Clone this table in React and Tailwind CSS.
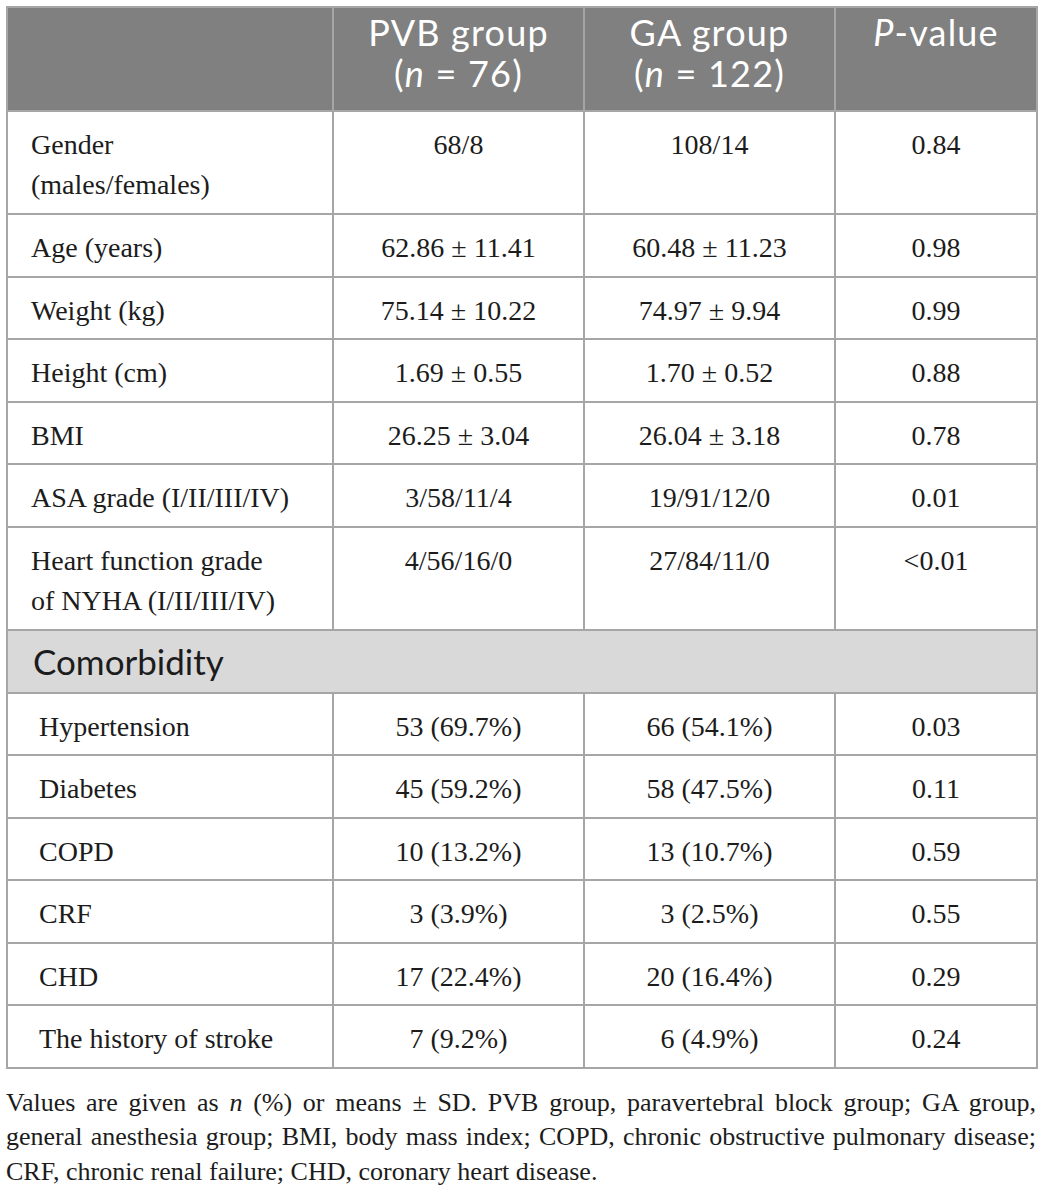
import React from 'react'

const rows = [
  { label: ['Gender', '(males/females)'], pvb: '68/8', ga: '108/14', p: '0.84' },
  { label: ['Age (years)'], pvb: '62.86 ± 11.41', ga: '60.48 ± 11.23', p: '0.98' },
  { label: ['Weight (kg)'], pvb: '75.14 ± 10.22', ga: '74.97 ± 9.94', p: '0.99' },
  { label: ['Height (cm)'], pvb: '1.69 ± 0.55', ga: '1.70 ± 0.52', p: '0.88' },
  { label: ['BMI'], pvb: '26.25 ± 3.04', ga: '26.04 ± 3.18', p: '0.78' },
  { label: ['ASA grade (I/II/III/IV)'], pvb: '3/58/11/4', ga: '19/91/12/0', p: '0.01' },
  { label: ['Heart function grade', 'of NYHA (I/II/III/IV)'], pvb: '4/56/16/0', ga: '27/84/11/0', p: '<0.01' },
]

const comorbidity = [
  { label: 'Hypertension', pvb: '53 (69.7%)', ga: '66 (54.1%)', p: '0.03' },
  { label: 'Diabetes', pvb: '45 (59.2%)', ga: '58 (47.5%)', p: '0.11' },
  { label: 'COPD', pvb: '10 (13.2%)', ga: '13 (10.7%)', p: '0.59' },
  { label: 'CRF', pvb: '3 (3.9%)', ga: '3 (2.5%)', p: '0.55' },
  { label: 'CHD', pvb: '17 (22.4%)', ga: '20 (16.4%)', p: '0.29' },
  { label: 'The history of stroke', pvb: '7 (9.2%)', ga: '6 (4.9%)', p: '0.24' },
]

const serif = "font-['Liberation_Serif',serif]"
const sans = "font-['Lato',sans-serif]"
const cell = 'border-2 border-[#a6a6a6] align-top pt-[13px] leading-[40px] text-[28px] text-[#1c1c1c]'
const head = 'border-2 border-[#a6a6a6] align-top pt-[4px] text-center text-[36px] font-normal leading-[41px] tracking-[1.2px]'

export default function App() {
  return (
    <div className="w-[1042px] bg-white px-[6px] pt-[6px]">
      <table className={`w-[1030px] table-fixed border-collapse ${serif}`}>
        <colgroup>
          <col className="w-[326px]" />
          <col className="w-[251px]" />
          <col className="w-[251px]" />
          <col className="w-[202px]" />
        </colgroup>
        <thead>
          <tr className={`h-[104px] bg-[#808080] text-white ${sans}`}>
            <th className="border-2 border-[#a6a6a6]" />
            <th className={head}>
              PVB group<br />(<i>n</i> = 76)
            </th>
            <th className={head}>
              GA group<br />(<i>n</i> = 122)
            </th>
            <th className={head}>
              <i>P</i>-value
            </th>
          </tr>
        </thead>
        <tbody>
          {rows.map((r) => (
            <tr key={r.label[0]} className={r.label.length > 1 ? 'h-[103px]' : 'h-[62.5px]'}>
              <td className={`${cell} pl-[23px]`}>
                {r.label.map((l) => (
                  <div key={l}>{l}</div>
                ))}
              </td>
              <td className={`${cell} text-center`}>{r.pvb}</td>
              <td className={`${cell} text-center`}>{r.ga}</td>
              <td className={`${cell} text-center`}>{r.p}</td>
            </tr>
          ))}
          <tr className="h-[63px] bg-[#d9d9d9]">
            <td colSpan={4} className={`border-2 border-[#a6a6a6] align-top pt-[10px] pl-[25px] text-[35px] leading-[41px] text-[#1c1c1c] ${sans}`}>
              Comorbidity
            </td>
          </tr>
          {comorbidity.map((r) => (
            <tr key={r.label} className="h-[62.5px]">
              <td className={`${cell} pl-[31px]`}>{r.label}</td>
              <td className={`${cell} text-center`}>{r.pvb}</td>
              <td className={`${cell} text-center`}>{r.ga}</td>
              <td className={`${cell} text-center`}>{r.p}</td>
            </tr>
          ))}
        </tbody>
      </table>
      <div className={`mt-[17px] pb-[10px] text-[26px] leading-[34.5px] text-[#1c1c1c] ${serif}`}>
        <p className="text-justify [text-align-last:justify] whitespace-nowrap">
          Values are given as <i>n</i> (%) or means ± SD. PVB group, paravertebral block group; GA group,
        </p>
        <p className="text-justify [text-align-last:justify] whitespace-nowrap">
          general anesthesia group; BMI, body mass index; COPD, chronic obstructive pulmonary disease;
        </p>
        <p>CRF, chronic renal failure; CHD, coronary heart disease.</p>
      </div>
    </div>
  )
}
